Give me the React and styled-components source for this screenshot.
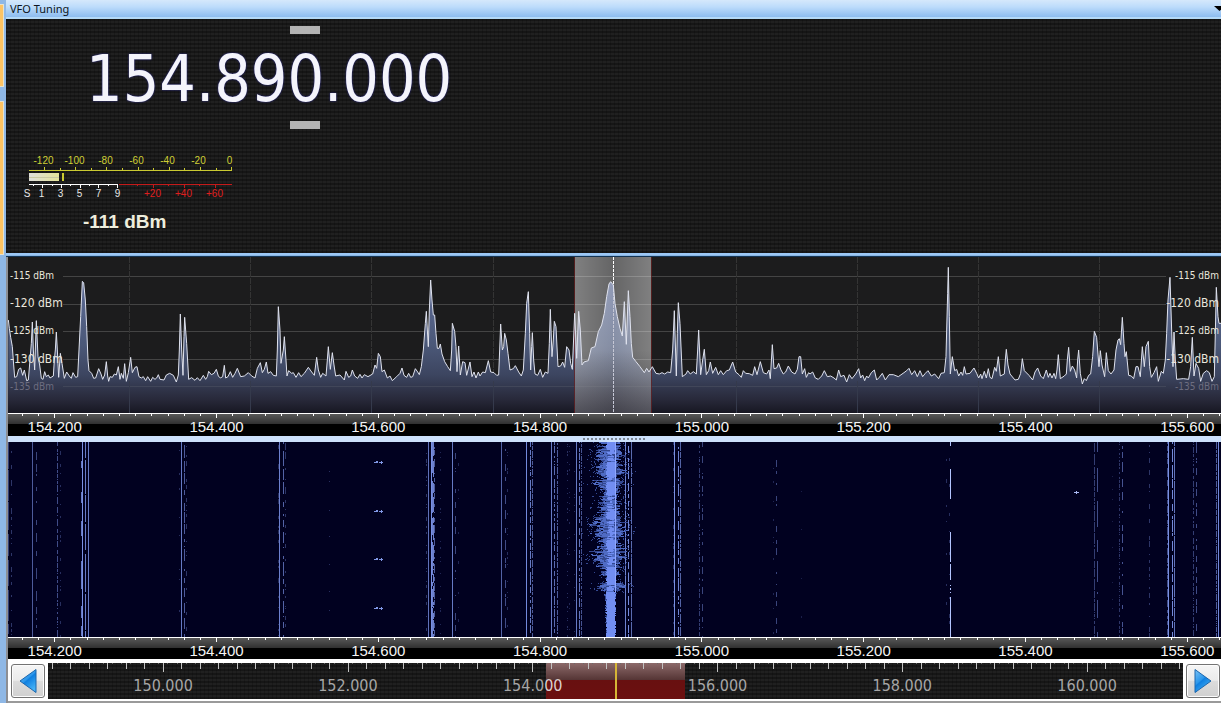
import React from "react";
import styled, { createGlobalStyle, css } from "styled-components";

const UI = '"DejaVu Sans Condensed", "DejaVu Sans", "Noto Sans", sans-serif';
const LABEL = '"Noto Sans", "Open Sans", sans-serif';
const ARIAL = '"Liberation Sans", Arial, sans-serif';

const GlobalStyle = createGlobalStyle`
  *, *::before, *::after { box-sizing: border-box; }
  body { margin: 0; background: #ffffff; overflow-x: hidden; }
`;

const weave = css`
  background-color: #1d1d1d;
  background-image:
    repeating-linear-gradient(90deg, rgba(0, 0, 0, 0.18) 0 1px, transparent 1px 4px),
    repeating-linear-gradient(0deg, #161616 0 2px, #202020 2px 4px);
`;

/* ---------- page ---------- */

const Page = styled.div`
  display: flex;
  width: 100%;
  font-family: ${UI};
`;

const DockEdge = styled.div`
  display: flex;
  flex-direction: column;
  gap: 14px;
  flex: 0 0 6px;
  padding-top: 4px;
  padding-right: 2px;
  background: #8fb8e6;
`;

const DockTab = styled.div`
  height: ${(p) => p.$height}px;
  background: #fdc465;
  border: solid #e6e2cf;
  border-width: 1px 1px 1px 0;
`;

const Workspace = styled.main`
  flex: 1 1 0;
  min-width: 0;
`;

const TitleBar = styled.header`
  display: flex;
  align-items: center;
  justify-content: space-between;
  height: 19px;
  padding-left: 4px;
  border-bottom: 2px solid #b4d9f7;
  background: linear-gradient(#d5e8fb, #bddcfb 40%, #8dbcef);
`;

const Title = styled.h1`
  margin: 0;
  font: 400 11px/16px ${LABEL};
  color: #0c1420;
`;

const MenuButton = styled.button`
  display: flex;
  width: 7px;
  height: 16px;
  padding: 0;
  overflow: hidden;
  align-items: center;
  border: 0;
  background: none;
  svg { flex: none; }
`;

/* ---------- tuner ---------- */

const Tuner = styled.section`
  ${weave}
  min-height: 234px;
  padding: 7px 0 0 22px;
`;

const TuneBar = styled.button`
  display: block;
  width: 30px;
  height: 8px;
  margin-left: 262px;
  padding: 0;
  border: 0;
  background: #b4b4b4;
`;

const Frequency = styled.output`
  display: block;
  height: 87px;
  padding: 4px 0 0 58px;
  font: 400 64px/83px ${UI};
  color: #f4f4fb;
  text-shadow: 0 0 2px #2d2d9c;
`;

const Meter = styled.div`
  width: 212px;
  margin-top: 26px;
  font: 400 10px/11px ${ARIAL};
`;

const DbmScale = styled.div`
  display: flex;
  width: 217px;
  color: #cfcf35;
`;

const SScale = styled.div`
  display: flex;
  color: #e8e8e8;
`;

const ScaleMark = styled.span`
  flex: 0 0 ${(p) => p.$width}px;
  margin-left: ${(p) => p.$gap || 0}px;
  text-align: center;
  color: ${(p) => p.$color || "inherit"};
`;

const MeterScales = styled.div`
  margin-left: ${(p) => p.$indent}px;
`;

const MeterArt = styled.svg`
  display: block;
  margin-left: 1px;
`;

const Level = styled.output`
  display: block;
  margin: 10px 0 0 55px;
  font: 700 19px/26px ${ARIAL};
  color: #eeeedd;
`;

/* ---------- spectrum ---------- */

const Rule = styled.div`
  height: 4px;
  background: linear-gradient(#9cc8f6, #9cc8f6 2px, #8ab6e4 2px, #8ab6e4 3px, #133454 3px);
`;

const Views = styled.div`
  border-left: 2px solid #8d8f94;
`;

const Plot = styled.section`
  position: relative;
  height: ${(p) => p.$height}px;
  background: ${(p) => p.$background};
  overflow: hidden;
`;

const PlotArt = styled.svg`
  display: block;
  width: 100%;
  height: 100%;
`;

const LevelLabels = styled.div`
  position: absolute;
  top: 5px;
  ${(p) => p.$side}: 2px;
  display: flex;
  flex-direction: column;
  height: 138px;
  text-align: ${(p) => p.$side};
`;

const LevelLabel = styled.span`
  display: flex;
  flex: 1;
  align-items: center;
  justify-content: ${(p) => (p.$right ? "flex-end" : "flex-start")};
  font-family: ${UI};
  font-size: ${(p) => (p.$large ? 12 : 10)}px;
  color: ${(p) => (p.$dim ? "#6d6d80" : "#e9e6dc")};
`;

const Axis = styled.div`
  position: relative;
  height: ${(p) => p.$height}px;
  overflow: hidden;
  background: linear-gradient(#5c5c5c, #303030 11px, #000000 11px);
`;

const AxisTicks = styled.svg`
  display: block;
  width: 100%;
  height: 5px;
`;

const AxisLabels = styled.div`
  display: flex;
  margin-left: -2.82%;
`;

const AxisLabel = styled.span`
  flex: 0 0 12.973%;
  text-align: center;
  font: 400 15px/18px ${ARIAL};
  color: #f4f4f4;
`;

const Splitter = styled.div`
  display: flex;
  align-items: center;
  justify-content: center;
  height: 6px;
  background: #cde1fb;
`;

const Grip = styled.div`
  width: 63px;
  height: 2px;
  background: repeating-linear-gradient(90deg, #7d8794 0 2px, transparent 2px 4px);
`;

/* ---------- band bar ---------- */

const BandRow = styled.nav`
  display: flex;
  align-items: stretch;
  height: 44px;
  padding: 4px 1px 4px 3px;
  border-bottom: 2px solid #9a9a9a;
  background: #ffffff;
`;

const StepButton = styled.button`
  display: flex;
  flex: 0 0 34px;
  align-items: center;
  justify-content: center;
  height: 34px;
  margin-top: 1px;
  padding: 0;
  border: 1px solid #737373;
  border-radius: 3px;
  background: linear-gradient(#f5f5f5, #ebebeb 48%, #dcdcdc 50%, #d0d0d0);
  box-shadow: inset 0 0 0 1px #fcfcfc;
`;

const Band = styled.div`
  ${weave}
  position: relative;
  flex: 1;
  height: 36px;
  margin: 0 3px;
`;

const BandArt = styled.svg`
  position: absolute;
  inset: 0;
  width: 100%;
  height: 100%;
`;

const BandLabels = styled.div`
  position: relative;
  display: flex;
  padding: 14px 0 0 2%;
`;

const BandLabel = styled.span`
  flex: 0 0 16.615%;
  text-align: center;
  font: 400 16px/18px ${UI};
  color: #a6a6a6;
`;

const Lit = styled.span`
  color: #dcd0d0;
`;

/* ---------- signal data ---------- */

const TRACE = [
  [0, "1,210 4,235 8,262 13,290 17,345 20,382 26,380 32,358 38,354 44,376 49,360 56,392 61,390 66,330 70,280 73,216 76,300 80,360 83,270 85,212 90,320 95,345 100,385 105,388 110,365 115,380 121,375 126,384 136,378 139,330 142,300 145,246 148,300 152,382 157,310 162,340 169,385 176,366 184,378 190,385 195,368 203,382 209,380 213,300 218,200 223,94 227,98 232,150 236,230 240,330 243,362 251,370 257,385 263,384 272,356 279,372 284,388 290,375 295,335 299,378 302,394 306,380 313,382 319,372 325,375 331,350 336,388 340,370 346,385 350,341 355,394 361,368 368,322 373,368 381,352 387,350 393,380 400,384 406,380 413,392 419,380 428,394 434,382 441,388 446,384 451,374 456,388 468,390 475,375 485,370 496,376 505,396 511,375 514,300 517,192 521,300 525,376 528,260 530,202 536,280 542,388 551,383 561,391 568,383 576,392 586,376 593,388 598,380 602,364 610,374 618,370 625,358 631,378 637,384 644,380 649,346 653,384 660,380 667,365 674,382 681,370 688,355 698,380 709,378 721,368 731,378 741,384 748,355 757,338 763,368 769,358 775,336 780,370 788,365 796,376 805,378 808,300 811,170 816,240 819,340 826,300 829,260 834,330 837,378 842,362 851,370 856,368 864,382 872,368 879,380 889,370 901,352 911,366 919,376 926,322 931,360 938,382 944,370 954,378 958,330 961,290 967,358 973,308 978,345 983,378 996,375 1009,390 1014,364 1022,382 1028,378 1033,360 1040,378 1049,385 1056,373 1062,384 1069,374 1080,380 1094,372 1101,345 1106,355 1111,310 1117,320 1122,365 1129,360 1138,384 1146,378 1153,392 1166,380"],
  [1176, "0,370 6,354 12,376 20,382 26,370 32,382 38,380 46,356 53,366 58,374 64,350 70,300 76,220 79,184 82,240 85,290 88,180 92,90 96,150 100,195 104,195 108,250 112,295 117,295 121,282 126,312 134,335 143,350 151,362 155,300 157,220 164,244 168,290 171,365 176,288 181,375 188,335 195,338 200,376 210,336 216,380 222,366 228,384 235,366 240,378 248,366 256,368 265,332 272,366 282,368 290,376 296,375 299,300 302,222 307,300 311,290 314,250 319,270 324,310 330,360 340,356 346,347 356,366 364,378 370,360 376,250 380,160 385,125 389,250 392,360 395,290 397,248 401,330 405,372 413,376 421,358 428,382 436,366 444,370 448,280 451,178 456,320 460,270 463,214 468,230 474,350 482,348 488,336 494,352 500,290 507,300 512,340 517,358 522,240 524,190 530,325 536,184 541,240 546,345 552,336 565,332 574,294 585,290 595,245 605,225 613,190 620,140 627,102 632,95 640,105 645,160 652,200 660,235 667,258 673,155 679,283 685,122 690,200 694,280 698,322 708,335 720,350 733,368 740,355 747,366 757,350 768,370 778,372 786,368 794,372 803,366 812,368 818,300 823,182 829,378 832,250 835,158 840,220 847,380 858,372 863,362 871,372 880,365 889,372 893,300 896,240 902,374 908,330 913,298 919,374 926,362 931,336 938,370 947,352 955,374 962,362 970,374 980,362 988,360 998,336 1007,366 1017,374 1024,382 1030,362 1037,370 1048,371 1058,376 1064,350 1071,374 1081,335 1090,368 1100,372 1107,360 1111,386 1117,284 1122,356 1130,354 1136,340 1143,360 1150,372 1157,366 1165,348 1175,366 1185,372 1192,358 1197,320 1202,320 1207,372 1214,356 1219,382 1226,368"],
  [2406, "0,372 8,366 16,384 25,388 35,378 43,362 52,380 62,378 72,384 79,390 86,360 92,380 102,376 110,396 118,374 126,386 137,372 146,356 152,384 158,375 164,392 170,378 175,384 184,368 193,360 200,390 208,382 217,370 226,390 237,374 250,374 265,380 282,368 290,362 297,355 305,374 314,362 322,380 330,362 338,380 346,370 354,362 364,378 374,372 386,386 393,370 403,368 408,320 410,240 413,130 415,52 418,200 421,372 427,320 434,362 440,358 446,378 453,366 458,376 463,350 468,372 480,370 492,354 500,370 506,384 512,372 516,386 523,364 529,384 535,356 540,382 546,386 554,352 559,364 565,320 571,378 583,372 586,330 589,298 594,345 600,372 615,390 625,388 632,370 637,326 643,362 657,376 668,390 675,366 683,354 692,378 700,386 709,360 715,382 720,370 726,384 732,370 737,386 741,360 745,314 751,386 763,378 769,372 772,330 776,292 781,364 787,348 794,360 800,384 803,330 806,300 811,370 817,402 823,386 829,392 836,376 842,372 848,320 853,244 860,262 863,300 867,350 871,302 876,345 884,380 889,308 895,362 903,372 912,360 918,300 924,270 928,266 932,284 937,202 942,280 945,320 949,305 956,376 964,378 971,386 978,350 984,350 991,380 997,290 1003,350 1008,290 1015,274 1019,350 1024,382 1032,368 1040,350 1045,394 1054,364 1060,370 1066,330 1070,250 1074,150 1080,82 1085,240 1089,350 1092,246 1096,330 1100,388 1120,386 1136,388 1142,350 1147,262 1152,378 1158,340 1166,355 1172,394 1180,370 1190,362 1198,368 1206,394 1213,380 1216,250 1219,112 1224,200 1227,220 1233,220"],
];

const tracePoints = TRACE.flatMap(([start, list]) =>
  list.split(" ").map((pair) => {
    const [x, y] = pair.split(",").map(Number);
    return [x + start, y - 21];
  })
);
const traceLine = "M" + tracePoints.map((p) => p.join(" ")).join("L");
const traceArea = `${traceLine}L3639 468L0 468Z`;

const GRID_X = [121, 242, 363, 485, 728, 849, 970, 1091];
const GRID_Y = [19, 47, 74, 102, 129];

// Carriers in the waterfall: x, opacity, share of rows lit, mean run length.
const CARRIERS = [
  [0, 0.4, 0.9, 20], [3, 0.35, 0.3, 3], [24, 0.6, 1, 1], [28, 0.45, 0.4, 6], [49, 0.5, 0.7, 4],
  [52, 0.3, 0.18, 2], [73, 0.8, 0.5, 20], [74, 0.95, 1, 1], [77, 0.8, 0.9, 20], [80, 0.8, 1, 1],
  [173, 0.8, 1, 1], [176, 0.6, 0.6, 7], [178, 0.35, 0.25, 3], [171, 0.3, 0.05, 1],
  [271, 0.85, 1, 1], [270, 0.3, 0.25, 3], [275, 0.65, 0.65, 8], [277, 0.35, 0.4, 4], [321, 0.3, 0.06, 1],
  [418, 0.35, 0.25, 2], [420, 0.75, 1, 1], [423, 0.95, 1, 1], [424, 0.85, 0.8, 20], [425, 0.85, 0.75, 9],
  [426, 0.6, 0.6, 5], [432, 0.25, 0.12, 1], [444, 0.8, 1, 1], [447, 0.45, 0.35, 5], [450, 0.25, 0.1, 2],
  [493, 0.65, 1, 1], [497, 0.5, 0.45, 6], [499, 0.3, 0.15, 2], [518, 0.9, 1, 1], [522, 0.8, 0.75, 7],
  [524, 0.6, 0.8, 4], [543, 0.8, 1, 1], [546, 0.7, 0.7, 5], [549, 0.6, 0.8, 4], [559, 0.3, 0.18, 1],
  [561, 0.25, 0.08, 1], [568, 0.8, 1, 1], [571, 0.75, 0.65, 5], [573, 0.55, 0.75, 3], [566, 0.3, 0.06, 1],
  [617, 0.85, 1, 1], [620, 0.9, 0.7, 6], [623, 0.7, 0.95, 12], [666, 0.95, 1, 1], [670, 0.85, 0.7, 7],
  [672, 0.65, 0.85, 6], [665, 0.3, 0.2, 2], [691, 0.4, 0.6, 3], [694, 0.45, 0.4, 4], [768, 0.45, 0.2, 4],
  [765, 0.25, 0.04, 1], [793, 0.2, 0.02, 1], [938, 0.3, 0.1, 2], [941, 0.3, 0.14, 3],
  [1086, 0.4, 0.85, 6], [1089, 0.5, 0.6, 14], [1111, 0.35, 0.5, 2], [1114, 0.55, 0.45, 6],
  [1141, 0.35, 0.3, 3], [1159, 0.5, 0.7, 5], [1160, 0.95, 1, 1], [1164, 0.9, 0.75, 9],
  [1166, 0.75, 0.97, 20], [1185, 0.4, 0.65, 3], [1188, 0.5, 0.5, 6], [1104, 0.2, 0.05, 1],
  [1208, 0.6, 0.85, 4], [1210, 0.9, 1, 1],
];

// Rows where the tuned signal's core is strongest.
const STRONG = [[0, 7], [20, 34], [40, 52], [70, 76], [98, 106], [125, 142], [150, 195]];

// Half-width of the tuned signal's skirt at a given row.
const SKIRT = [[0, 12], [6, 14], [12, 21], [20, 14], [27, 22], [31, 23], [35, 10], [39, 23], [46, 12], [66, 14], [74, 14],
  [78, 21], [92, 21], [102, 12], [106, 20], [115, 23], [124, 15], [128, 7], [131, 17], [134, 7], [140, 8],
  [142, 24], [146, 17], [149, 8], [156, 6], [195, 5]];

const randomFrom = (seed) => () => {
  seed = (seed * 1664525 + 1013904223) % 4294967296;
  return seed / 4294967296;
};

const HEIGHT = 195;

function carrierPath([x, , share, run], index) {
  if (share === 1) return `M${x} 0v${HEIGHT}h1v-${HEIGHT}z`;
  const rnd = randomFrom(977 * (index + 3));
  rnd();
  let path = "";
  let y = 0;
  let on = rnd() < share;
  while (y < HEIGHT) {
    const mean = on ? run : (run * (1 - share)) / share;
    const length = Math.max(1, Math.round(mean * (0.1 + 1.8 * rnd())));
    const end = Math.min(HEIGHT, y + length);
    if (on) path += `M${x} ${y}v${end - y}h1v-${end - y}z`;
    y = end;
    on = !on;
  }
  return path;
}

function skirtAt(y) {
  const i = SKIRT.findIndex(([row]) => row >= y);
  if (i <= 0) return SKIRT[0][1];
  const [y0, w0] = SKIRT[i - 1];
  const [y1, w1] = SKIRT[i];
  return w0 + ((w1 - w0) * (y - y0)) / (y1 - y0);
}

function tunedSignal() {
  const rnd = randomFrom(4211);
  const layers = ["", "", ""];
  const centre = 603;
  const run = (layer, x, y, w) => {
    layers[layer] += `M${x} ${y}h${w}v1h-${w}z`;
  };
  for (let y = 0; y < HEIGHT; y++) {
    const calm = y > 150;
    const strong = STRONG.some(([a, b]) => y >= a && y <= b);
    for (const side of [-1, 1]) {
      const reach = Math.round(skirtAt(y) * (calm ? 0.85 + 0.2 * rnd() : 0.5 + 0.55 * rnd()) * (side > 0 ? 0.78 : 1));
      let d = 0;
      while (d < reach) {
        const w = Math.min(reach - d, 1 + Math.floor(rnd() * 4));
        const near = 1 - d / reach;
        const lit = rnd() < 0.62 + near * 0.6;
        if (lit) {
          const layer = rnd() < 0.2 + near * 0.6 ? 1 : 0;
          run(layer, side > 0 ? centre + d : centre - d - w, y, w);
        }
        d += w;
      }
      if (!calm) {
        for (let k = 0; k < 2; k++) {
          if (rnd() < 0.45) run(0, centre + side * (reach + 1 + Math.floor(rnd() * 8)), y, 1);
        }
      }
    }
    const left = (strong ? 4 : 1) + Math.floor(rnd() * (strong ? 2 : 4));
    const right = (strong ? 4 : 1) + Math.floor(rnd() * (strong ? 2 : 4));
    if (strong || rnd() < 0.75) run(2, centre - left, y, left + right);
  }
  return layers;
}

const SIGNAL = tunedSignal();
const BEEPS = [20, 69, 117, 166];
const PULSES = [[0, 4], [27, 57], [90, 120], [122, 138], [143, 144], [146, 148], [150, 151], [155, 195]];

const AXIS_LABELS = ["154.200", "154.400", "154.600", "154.800", "155.000", "155.200", "155.400", "155.600"];

/* ---------- parts ---------- */

function SignalMeter() {
  return (
    <Meter>
      <MeterScales $indent={0}>
        <DbmScale>
          {["-120", "-100", "-80", "-60", "-40", "-20", "0"].map((v) => (
            <ScaleMark key={v} $width={31}>{v}</ScaleMark>
          ))}
        </DbmScale>
      </MeterScales>
      <MeterArt width="204" height="22" viewBox="0 0 204 22" shapeRendering="crispEdges" aria-hidden="true">
        <defs>
          <linearGradient id="level" x1="0" x2="1" y1="0" y2="0">
            <stop offset="0" stopColor="#dededb" />
            <stop offset="1" stopColor="#e4e49a" />
          </linearGradient>
        </defs>
        <path
          stroke="#c9c931"
          d={"M0 4.5H203" + Array.from({ length: 13 }, (_, i) => {
            const x = Math.round(15 + i * 15.6) + 0.5;
            return `M${x} 4V${i % 2 ? 2 : 1}`;
          }).join("")}
        />
        <rect x="0" y="7" width="30" height="8" fill="url(#level)" />
        <path d="M0 11.5h30" stroke="#c9c9a4" />
        <rect x="33" y="7" width="2" height="8" fill="#c9c931" />
        <path
          stroke="#ffffff"
          d={"M0 18.5H89" + [4, 13, 23, 32, 41, 51, 60, 69, 79, 88].map((x, i) => `M${x}.5 19v${i % 2 ? 3 : 1}`).join("")}
        />
        <path
          stroke="#c41a1a"
          d={"M90 18.5H203" + [108, 124, 139, 155, 170, 186].map((x, i) => `M${x}.5 19v${i % 2 ? 3 : 1}`).join("")}
        />
      </MeterArt>
      <MeterScales $indent={-6}>
        <SScale>
          <ScaleMark $width={10}>S</ScaleMark>
          {[1, 3, 5, 7, 9].map((v) => <ScaleMark key={v} $width={19}>{v}</ScaleMark>)}
          {["+20", "+40", "+60"].map((v, i) => (
            <ScaleMark key={v} $width={31} $gap={i ? 0 : 10} $color="#e01f1f">{v}</ScaleMark>
          ))}
        </SScale>
      </MeterScales>
      <Level>-111 dBm</Level>
    </Meter>
  );
}

function Levels({ side }) {
  return (
    <LevelLabels $side={side}>
      {[-115, -120, -125, -130, -135].map((v) => (
        <LevelLabel key={v} $right={side === "right"} $large={v % 10 === 0} $dim={v === -135}>
          {v} dBm
        </LevelLabel>
      ))}
    </LevelLabels>
  );
}

function Spectrum() {
  return (
    <Plot $height={156} $background="#1c1c1d" aria-label="Spectrum">
      <PlotArt viewBox="0 0 1213 156" preserveAspectRatio="none">
        <defs>
          <linearGradient id="fill" gradientUnits="userSpaceOnUse" x1="0" y1="60" x2="0" y2="468">
            <stop offset="0" stopColor="#5f6d98" />
            <stop offset="0.5" stopColor="#4b5878" />
            <stop offset="0.72" stopColor="#3c4560" />
            <stop offset="0.9" stopColor="#28293a" />
            <stop offset="1" stopColor="#171722" />
          </linearGradient>
          <linearGradient id="passband" x1="0" x2="1" y1="0" y2="0">
            <stop offset="0" stopColor="#ffffff" stopOpacity="0.44" />
            <stop offset="0.5" stopColor="#ffffff" stopOpacity="0.32" />
            <stop offset="1" stopColor="#ffffff" stopOpacity="0.44" />
          </linearGradient>
          <linearGradient id="passbandFade" x1="0" x2="0" y1="0" y2="1">
            <stop offset="0" stopColor="#1c1c1d" stopOpacity="0" />
            <stop offset="0.6" stopColor="#1c1c1d" stopOpacity="0" />
            <stop offset="1" stopColor="#1c1c28" stopOpacity="0.45" />
          </linearGradient>
        </defs>
        <g shapeRendering="crispEdges">
          {GRID_Y.map((y) => <path key={y} d={`M55 ${y}.5H1158`} stroke="#444444" />)}
          {GRID_X.map((x) => <path key={x} d={`M${x}.5 0V156`} stroke="#343434" strokeDasharray="6 1" />)}
        </g>
        <g transform="scale(0.33333)">
          <path d={traceArea} fill="url(#fill)" />
        </g>
        <g shapeRendering="crispEdges">
          <path d="M55 129.5H1158" stroke="#414659" />
          {GRID_X.map((x) => <path key={x} d={`M${x}.5 124V156`} stroke="#353a4c" />)}
          <rect x="567" y="0" width="76" height="156" fill="url(#passband)" />
          <rect x="567" y="0" width="76" height="156" fill="url(#passbandFade)" />
          <path d="M566.5 0V156M643.5 0V156" stroke="#6b2020" strokeOpacity="0.7" />
          <path d="M605.5 0V30" stroke="#ffffff" strokeDasharray="3 1" />
          <path d="M605.5 32V156" stroke="#c4c6d4" strokeDasharray="3 1" />
        </g>
        <g transform="scale(0.33333)">
          <path d={traceLine} fill="none" stroke="#dfe2ee" strokeWidth="1" vectorEffect="non-scaling-stroke" />
        </g>
      </PlotArt>
      <Levels side="left" />
      <Levels side="right" />
    </Plot>
  );
}

function Waterfall() {
  return (
    <Plot $height={195} $background="#010120" aria-label="Waterfall">
      <PlotArt viewBox={`0 0 1213 ${HEIGHT}`} preserveAspectRatio="none" shapeRendering="crispEdges">
        {CARRIERS.map((c, i) => (
          <path key={c[0]} d={carrierPath(c, i)} fill="#8098ee" fillOpacity={c[1]} />
        ))}
        <path d={SIGNAL[0]} fill="#33478f" />
        <path d={SIGNAL[1]} fill="#4f6bc4" />
        <path d={SIGNAL[2]} fill="#728ef2" />
        <path d="M607 0v150h1v-150z" fill="#8fa7ff" />
        <path d={PULSES.map(([a, b]) => `M942 ${a}v${b - a}h1v${a - b}z`).join("")} fill="#b3c4ff" />
        {BEEPS.map((y) => (
          <path key={y} d={`M366 ${y}h4v1h-4zM371 ${y}h4v1h-4zM368 ${y - 1}h2v1h-2zM373 ${y - 1}h1v3h-1z`} fill="#8198e6" />
        ))}
        <path d="M1066 50h5v1h-5zM1068 49h1v3h-1z" fill="#a9b8f2" />
      </PlotArt>
    </Plot>
  );
}

function FrequencyAxis({ height }) {
  return (
    <Axis $height={height}>
      <AxisTicks viewBox="0 0 1213 5" preserveAspectRatio="none" shapeRendering="crispEdges" aria-hidden="true">
        <path
          stroke="#ffffff"
          d={"M0 0.5H1213" + Array.from({ length: 75 }, (_, i) => {
            const x = Math.floor(14.4 + i * 16.18) + 0.5;
            return `M${x} 1V${i % 10 === 2 ? 5 : 3}`;
          }).join("")}
        />
      </AxisTicks>
      <AxisLabels>
        {AXIS_LABELS.map((v) => <AxisLabel key={v}>{v}</AxisLabel>)}
      </AxisLabels>
    </Axis>
  );
}

function Arrow({ flip }) {
  const id = flip ? "arrowR" : "arrowL";
  return (
    <svg width="20" height="26" viewBox="0 0 20 26" aria-hidden="true">
      <defs>
        <linearGradient id={id} x1="0" x2="0.6" y1="0" y2="1">
          <stop offset="0" stopColor="#7cc4f7" />
          <stop offset="0.5" stopColor="#2a96ea" />
          <stop offset="0.55" stopColor="#0f7fe0" />
          <stop offset="1" stopColor="#45b2f6" />
        </linearGradient>
      </defs>
      <path
        d={flip ? "M2 1.5L18 13L2 24.5Z" : "M18 1.5L2 13L18 24.5Z"}
        fill={`url(#${id})`}
        stroke="#1c66ad"
        strokeLinejoin="round"
      />
    </svg>
  );
}

function BandSelector() {
  const ticks = Array.from({ length: 62 }, (_, i) => {
    const x = Math.floor(4.5 + i * 18.48) + 0.5;
    return x < 1135 ? `M${x} 0V${i % 10 === 6 ? 9 : 6}` : "";
  }).join("");
  const fine = Array.from({ length: 124 }, (_, i) => `M${Math.floor(9 + i * 9.24) + 0.5} 0V1`).join("");
  return (
    <BandRow aria-label="Band">
      <StepButton type="button" aria-label="Lower band"><Arrow /></StepButton>
      <Band>
        <BandArt viewBox="0 0 1135 36" preserveAspectRatio="none" shapeRendering="crispEdges" aria-hidden="true">
          <defs>
            <linearGradient id="window" x1="0" x2="0" y1="0" y2="1">
              <stop offset="0" stopColor="#8c6a6a" />
              <stop offset="0.46" stopColor="#563636" />
              <stop offset="0.47" stopColor="#681010" />
              <stop offset="1" stopColor="#6b1010" />
            </linearGradient>
          </defs>
          <rect x="498" y="0" width="139" height="36" fill="url(#window)" />
          <path d={fine} stroke="#6a6a6a" />
          <path d={ticks} stroke="#c2c2c2" />
          <rect x="567" y="0" width="2" height="36" fill="#d6b636" />
        </BandArt>
        <BandLabels>
          <BandLabel>150.000</BandLabel>
          <BandLabel>152.000</BandLabel>
          <BandLabel>154.0<Lit>00</Lit></BandLabel>
          <BandLabel>156.000</BandLabel>
          <BandLabel>158.000</BandLabel>
          <BandLabel>160.000</BandLabel>
        </BandLabels>
      </Band>
      <StepButton type="button" aria-label="Higher band"><Arrow flip /></StepButton>
    </BandRow>
  );
}

export default function App() {
  return (
    <>
      <GlobalStyle />
      <Page>
        <DockEdge>
          <DockTab $height={83} />
          <DockTab $height={154} />
        </DockEdge>
        <Workspace>
          <TitleBar>
            <Title>VFO Tuning</Title>
            <MenuButton type="button" aria-label="Panel menu">
              <svg width="11" height="6" viewBox="0 0 11 6"><path d="M0 0H11L5.5 5Z" fill="#000000" /></svg>
            </MenuButton>
          </TitleBar>
          <Tuner>
            <TuneBar type="button" aria-label="Step up" />
            <Frequency>154.890.000</Frequency>
            <TuneBar type="button" aria-label="Step down" />
            <SignalMeter />
          </Tuner>
          <Rule />
          <Views>
            <Spectrum />
            <FrequencyAxis height={23} />
            <Splitter><Grip /></Splitter>
            <Waterfall />
            <FrequencyAxis height={22} />
            <BandSelector />
          </Views>
        </Workspace>
      </Page>
    </>
  );
}
